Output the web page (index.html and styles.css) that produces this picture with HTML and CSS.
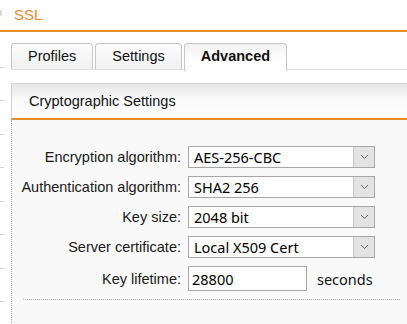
FILE: index.html
```html
<!DOCTYPE html>
<html>
<head>
<meta charset="utf-8">
<link rel="stylesheet" href="styles.css">
</head>
<body>
<div class="topbar"><span class="nub"></span><span class="title">SSL</span></div>
<div class="layout">
  <div class="rail">
    <div class="rail-item first"></div>
    <div class="rail-item"></div>
    <div class="rail-item"></div>
    <div class="rail-item"></div>
    <div class="rail-item"></div>
    <div class="rail-item"></div>
    <div class="rail-item"></div>
    <div class="rail-item"></div>
  </div>
  <div class="main">
    <div class="tabs">
      <div class="tab">Profiles</div>
      <div class="tab">Settings</div>
      <div class="tab active">Advanced</div>
    </div>
    <div class="panel">
      <div class="panel-head">Cryptographic Settings</div>
      <div class="panel-body">
        <div class="form">
          <div class="label">Encryption algorithm:</div>
          <div class="select"><span class="value">AES-256-CBC</span><span class="arrow"><svg width="9" height="6" viewBox="0 0 9 6"><polyline points="1,1 4.5,4.5 8,1" fill="none" stroke="#666" stroke-width="1"/></svg></span></div>
          <div class="label">Authentication algorithm:</div>
          <div class="select"><span class="value">SHA2 256</span><span class="arrow"><svg width="9" height="6" viewBox="0 0 9 6"><polyline points="1,1 4.5,4.5 8,1" fill="none" stroke="#666" stroke-width="1"/></svg></span></div>
          <div class="label">Key size:</div>
          <div class="select"><span class="value">2048 bit</span><span class="arrow"><svg width="9" height="6" viewBox="0 0 9 6"><polyline points="1,1 4.5,4.5 8,1" fill="none" stroke="#666" stroke-width="1"/></svg></span></div>
          <div class="label">Server certificate:</div>
          <div class="select"><span class="value">Local X509 Cert</span><span class="arrow"><svg width="9" height="6" viewBox="0 0 9 6"><polyline points="1,1 4.5,4.5 8,1" fill="none" stroke="#666" stroke-width="1"/></svg></span></div>
          <div class="label">Key lifetime:</div>
          <div class="field"><input class="input" type="text" value="28800"><span class="unit">seconds</span></div>
        </div>
        <div class="sep"></div>
      </div>
    </div>
  </div>
</div>
</body>
</html>
```
FILE: styles.css
```css
html, body {
  margin: 0;
  padding: 0;
  background: #fff;
  overflow: hidden;
}
body {
  width: 407px;
  height: 324px;
  font-family: "Liberation Sans", Arial, sans-serif;
  font-size: 14.5px;
  color: #1a1a1a;
}
.topbar {
  height: 30px;
  display: flex;
  align-items: center;
  border-bottom: 2px solid #ec8a2c;
}
.nub {
  width: 2px;
  height: 6px;
  margin-top: -4px;
  background: #d6d6d6;
  border-radius: 0 3px 3px 0;
}
.title {
  margin-left: 12px;
  font-size: 15px;
  color: #ea8a2e;
  line-height: 30px;
}
.layout {
  display: flex;
  height: 292px;
}
.rail {
  width: 4px;
  flex: none;
  padding-top: 2px;
}
.rail-item {
  height: 32.5px;
  border-bottom: 1px solid #d2d2d2;
}
.main {
  flex: 1;
  padding-left: 7px;
  display: flex;
  flex-direction: column;
}
.tabs {
  display: flex;
  align-items: flex-start;
  margin-top: 11px;
  height: 26px;
  border-bottom: 1px solid #dedede;
}
.tab {
  height: 25px;
  line-height: 25px;
  padding: 0 16px;
  margin-right: 2px;
  border: 1px solid #c6c6c6;
  border-bottom: none;
  border-radius: 4px 4px 0 0;
  background: linear-gradient(#fcfcfc, #f0f0f0);
  color: #111;
}
.tab.active {
  height: 27px;
  font-weight: bold;
  background: linear-gradient(#f1f1f1, #ffffff 60%);
}
.panel {
  margin-top: 13px;
  flex: 1;
  display: flex;
  flex-direction: column;
}
.panel-head {
  height: 34px;
  line-height: 34px;
  padding-left: 17px;
  border-top: 1px solid #d4d4d4;
  border-left: 1px solid #cfcfcf;
  border-bottom: 2px solid #ec8a2c;
  background: linear-gradient(#e6e6e6, #fafafa 45%, #ffffff);
  color: #111;
}
.panel-body {
  flex: 1;
  background: #f9f9f9;
  border-left: 1px dotted #a8a8a8;
  padding-top: 26px;
}
.form {
  display: grid;
  grid-template-columns: 169px auto;
  column-gap: 7px;
  row-gap: 8px;
  align-items: center;
}
.label {
  text-align: right;
  color: #1a1a1a;
  white-space: nowrap;
}
.select {
  width: 187px;
  height: 22px;
  box-sizing: border-box;
  border: 1px solid #a6a6a6;
  background: #fff;
  display: flex;
  align-items: center;
  font-family: "Noto Sans", "Open Sans", sans-serif;
  font-size: 14.5px;
  color: #000;
}
.value {
  flex: 1;
  padding-left: 5px;
  line-height: 20px;
}
.arrow {
  width: 20px;
  height: 20px;
  background: #e3e3e3;
  border-left: 1px solid #c9c9c9;
  display: flex;
  align-items: center;
  justify-content: center;
}
.field {
  display: flex;
  align-items: center;
  gap: 10px;
}
.input {
  width: 119px;
  height: 25px;
  box-sizing: border-box;
  margin: 0;
  border: 1px solid #a6a6a6;
  padding: 0 3px;
  background: #fff;
  font-family: "Noto Sans", "Open Sans", sans-serif;
  font-size: 14.5px;
  color: #000;
  outline: none;
}
.unit {
  font-family: "Noto Sans", "Open Sans", sans-serif;
  font-size: 14.5px;
  color: #111;
}
.sep {
  margin: 8px 7px 0 11px;
  border-top: 1px dotted #a8a8a8;
}
```
